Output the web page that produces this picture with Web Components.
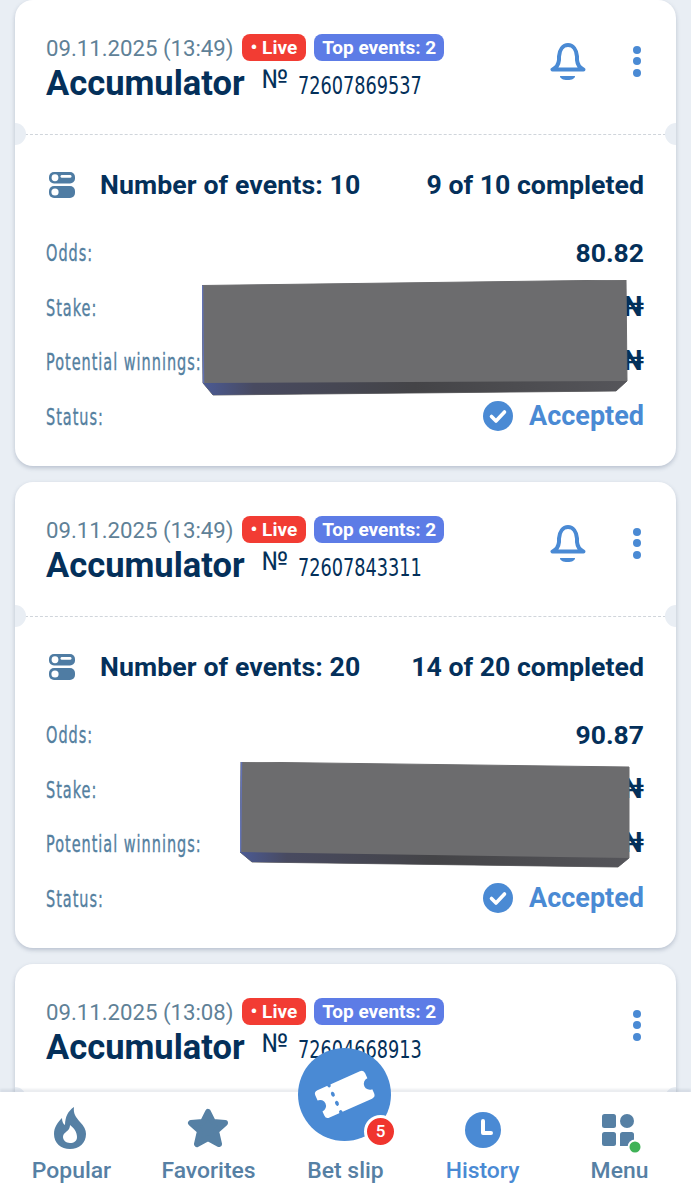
<!DOCTYPE html>
<html lang="en">
<head>
<meta charset="utf-8">
<title>Bet history</title>
<style>
  html, body { margin: 0; padding: 0; background: #e9eef4; }
  body { font-family: Roboto, "Liberation Sans", sans-serif; }
</style>
</head>
<body>
<app-shell>
  <bet-card>
    <span slot="date">09.11.2025 (13:49)</span>
    <span slot="number">72607869537</span>
    <span slot="events">Number of events: 10</span>
    <span slot="completed">9 of 10 completed</span>
    <span slot="odds">80.82</span>
    <bell-icon slot="bell"></bell-icon>
    <redact-block slot="cover" points="0,5.5 424,0 425,101 414,111 11,115 1,103" fold="1,103 425,101 414,111 11,115" style="left:187px;top:280px;width:426px;height:116px"></redact-block>
  </bet-card>
  <bet-card>
    <span slot="date">09.11.2025 (13:49)</span>
    <span slot="number">72607843311</span>
    <span slot="events">Number of events: 20</span>
    <span slot="completed">14 of 20 completed</span>
    <span slot="odds">90.87</span>
    <bell-icon slot="bell"></bell-icon>
    <redact-block slot="cover" points="1,0 389,5 389,96 378,105 12,100 0,90" fold="0,90 389,96 378,105 12,100" style="left:225px;top:280px;width:390px;height:106px"></redact-block>
  </bet-card>
  <bet-card peek>
    <span slot="date">09.11.2025 (13:08)</span>
    <span slot="number">72604668913</span>
  </bet-card>
  <nav-bar slot="nav"></nav-bar>
</app-shell>

<script>
/**
 * Define the bell icon.
 */
customElements.define('bell-icon',
  class extends HTMLElement {
    constructor () {
      super()
      this.attachShadow({ mode: 'open' }).innerHTML = `
        <style>
          :host { display: block; width: 36px; height: 38px; }
          svg { display: block; }
        </style>
        <svg width="36" height="38" viewBox="0 0 36 38" fill="none">
          <path d="M2.5 26.5H33.5C30 25 27.5 22 27 17V13.5C26.5 6.5 23 2 18 2C13 2 9.500 6.500 9 13.500V17C8.500 22 6 25 2.500 26.500Z" stroke="#4a8ad4" stroke-width="4" stroke-linejoin="round"/>
          <path d="M10 33H25C25 35.500 22 37 17.500 37C13 37 10 35.500 10 33Z" fill="#4a8ad4"/>
        </svg>`
    }
  }
)

/**
 * Define the grey block laid over the hidden amounts.
 */
customElements.define('redact-block',
  class extends HTMLElement {
    constructor () {
      super()
      this.attachShadow({ mode: 'open' })
    }

    /**
     * Called after the element is inserted into the DOM.
     */
    connectedCallback () {
      const id = 'g' + Math.round(Math.random() * 1e6)
      const fold = this.getAttribute('fold').split(/[ ,]/).map(Number)
      const top = this.getAttribute('points').split(/[ ,]/).map(Number)
      this.shadowRoot.innerHTML = `
        <style>
          :host { display: block; position: absolute; }
          svg { display: block; width: 100%; height: 100%; }
        </style>
        <svg viewBox="0 0 ${parseInt(this.style.width)} ${parseInt(this.style.height)}">
          <defs>
            <linearGradient id="${id}" x1="0" x2="1" y1="0" y2="0">
              <stop offset="0" stop-color="#4b5a94"/>
              <stop offset="0.12" stop-color="#484a60"/>
              <stop offset="0.5" stop-color="#444447"/>
              <stop offset="1" stop-color="#55555a"/>
            </linearGradient>
          </defs>
          <polygon points="${this.getAttribute('points')}" fill="#6c6c6e" stroke="#6c6c6e" stroke-width="1" stroke-linejoin="round"/>
          <polygon points="${this.getAttribute('fold')}" fill="url(#${id})"/>
          <path d="M${top[0] + 0.5} ${top[1]}L${fold[0] + 0.5} ${fold[1]}" stroke="#6272b4" stroke-width="1.500" fill="none"/>
        </svg>`
    }
  }
)

/**
 * Define a label and value row of a bet card.
 */
customElements.define('info-row',
  class extends HTMLElement {
    constructor () {
      super()
      this.attachShadow({ mode: 'open' }).innerHTML = `
        <style>
          :host {
            display: flex;
            align-items: center;
            justify-content: space-between;
            height: 54.500px;
          }
          .label {
            flex: 0 0 0;
            padding-top: 2px;
            font: 400 23px "DejaVu Sans Condensed", "DejaVu Sans", sans-serif;
            color: #54809f;
            letter-spacing: 1.400px;
            -webkit-text-stroke: .35px #54809f;
            transform: scaleX(.7);
            transform-origin: left center;
            white-space: nowrap;
          }
          .value {
            display: flex;
            align-items: center;
            gap: 16px;
            font: 700 27px Roboto, sans-serif;
            color: #04305a;
          }
        </style>
        <span class="label"><slot name="label"></slot></span>
        <span class="value"><slot></slot></span>`
    }
  }
)

/**
 * Define the bet card.
 */
const cardTemplate = document.createElement('template')
cardTemplate.innerHTML = `
  <style>
    :host {
      display: block;
      position: relative;
      width: 661px;
      height: 466px;
      flex: none;
      background: #fff;
      border-radius: 18px;
      box-shadow: 0 2px 4px rgba(60, 80, 110, .28);
      color: #04305a;
    }
    :host([peek]) .body { display: none; }
    header {
      position: relative;
      box-sizing: border-box;
      height: 135px;
      padding: 34px 31px 0;
      border-bottom: 1px dashed #d0d5db;
    }
    .notch {
      position: absolute;
      top: 123px;
      width: 22px;
      height: 22px;
      border-radius: 50%;
      background: #e9eef4;
    }
    .notch.left { left: -11px; clip-path: inset(0 0 0 11px); }
    .notch.right { right: -11px; clip-path: inset(0 11px 0 0); }
    .top { display: flex; align-items: center; gap: 8px; height: 27px; }
    .date { font-size: 22.200px; color: #5f8197; white-space: nowrap; }
    .badge {
      box-sizing: border-box;
      height: 27px;
      padding: 0 8px;
      border-radius: 8px;
      font-size: 19px;
      font-weight: 700;
      line-height: 27px;
      color: #fff;
      white-space: nowrap;
    }
    .live { background: #f23c33; padding: 0 9px; }
    .count { background: #5d7ce6; }
    .title { display: flex; align-items: flex-start; margin-top: 3px; }
    h2 { margin: 0; font-size: 34.500px; line-height: 38px; font-weight: 700; color: #04305a; white-space: nowrap; }
    .no { margin: 2px 0 0 17px; font-size: 26px; line-height: 26px; width: 25px; flex: none; }
    .num {
      margin: 10px 0 0 11px;
      font: 400 24px/24px "DejaVu Sans Condensed", "DejaVu Sans", sans-serif;
      transform: scaleX(.82);
      transform-origin: left center;
      white-space: nowrap;
    }
    .actions {
      position: absolute;
      top: 43px;
      right: 35px;
      display: flex;
      align-items: flex-start;
      gap: 47px;
    }
    .kebab { display: flex; flex-direction: column; gap: 3.500px; margin-top: 2.500px; width: 8px; }
    .kebab i { display: block; width: 8px; height: 8px; border-radius: 50%; background: #4a8ad4; }
    .body { padding: 35px 32px 22px 31px; }
    .events { display: flex; align-items: center; height: 30px; font-size: 26.700px; font-weight: 700; white-space: nowrap; }
    .events svg { margin: 0 25px 0 3px; flex: none; }
    .events .count-text { letter-spacing: .1px; }
    .events .done { margin-left: auto; }
    .rows { margin-top: 25px; }
    .accepted { color: #4a8ad4; }
    .check { display: block; }
    .odds { font-size: 26.500px; }
  </style>
  <header>
    <div class="top">
      <span class="date"><slot name="date"></slot></span>
      <span class="badge live">&bull; Live</span>
      <span class="badge count">Top events: 2</span>
    </div>
    <div class="title">
      <h2>Accumulator</h2>
      <span class="no">№</span>
      <span class="num"><slot name="number"></slot></span>
    </div>
    <div class="actions">
      <slot name="bell"></slot>
      <div class="kebab"><i></i><i></i><i></i></div>
    </div>
  </header>
  <i class="notch left"></i>
  <i class="notch right"></i>
  <div class="body">
    <div class="events">
      <svg width="26" height="26" viewBox="0 0 26 26">
        <rect x="0" y="0" width="26" height="11.500" rx="5" fill="#4f7ca3"/>
        <rect x="0" y="14" width="26" height="12" rx="5" fill="#4f7ca3"/>
        <circle cx="6" cy="5.750" r="3.400" fill="#fff"/>
        <rect x="11.500" y="3" width="11" height="2.800" rx="1.400" fill="#fff"/>
        <circle cx="6" cy="20" r="3.600" fill="#fff"/>
      </svg>
      <span class="count-text"><slot name="events"></slot></span>
      <span class="done"><slot name="completed"></slot></span>
    </div>
    <div class="rows">
      <info-row><span slot="label">Odds:</span><span class="odds"><slot name="odds"></slot></span></info-row>
      <info-row><span slot="label">Stake:</span>₦</info-row>
      <info-row><span slot="label">Potential winnings:</span>₦</info-row>
      <info-row>
        <span slot="label">Status:</span>
        <svg class="check" width="30" height="30" viewBox="0 0 30 30">
          <circle cx="15" cy="15" r="15" fill="#4a8ad4"/>
          <path d="M8.500 15.500L13 20L21.500 11" fill="none" stroke="#fff" stroke-width="3.600" stroke-linecap="round" stroke-linejoin="round"/>
        </svg>
        <span class="accepted">Accepted</span>
      </info-row>
    </div>
  </div>
  <slot name="cover"></slot>
`

customElements.define('bet-card',
  class extends HTMLElement {
    constructor () {
      super()
      this.attachShadow({ mode: 'open' })
        .appendChild(cardTemplate.content.cloneNode(true))
    }
  }
)

/**
 * Define one item of the bottom navigation.
 */
customElements.define('nav-item',
  class extends HTMLElement {
    constructor () {
      super()
      this.attachShadow({ mode: 'open' }).innerHTML = `
        <style>
          :host {
            display: flex;
            flex-direction: column;
            align-items: center;
            color: #5680a4;
            font-size: 22.900px;
            font-weight: 500;
          }
          :host([active]) { color: #4a8ad4; }
          .icon { height: 42px; margin-top: 15px; display: flex; align-items: center; justify-content: center; }
          .text { margin-top: 9px; line-height: 26px; white-space: nowrap; }
        </style>
        <div class="icon"><slot name="icon"></slot></div>
        <div class="text"><slot></slot></div>`
    }
  }
)

/**
 * Define the bottom navigation.
 */
const navTemplate = document.createElement('template')
navTemplate.innerHTML = `
  <style>
    :host {
      display: block;
      position: relative;
      height: 108px;
      background: #fff;
      box-shadow: 0 -3px 2px rgba(60, 80, 110, .1);
    }
    .items { display: grid; grid-template-columns: repeat(5, 137px); padding: 0 3px; }
    .fab {
      position: absolute;
      left: 298px;
      top: -44px;
      width: 93px;
      height: 93px;
      border-radius: 50%;
      background: #4a8ad4;
    }
    .fab svg { display: block; }
    .count {
      position: absolute;
      left: 66px;
      top: 67px;
      width: 27px;
      height: 27px;
      border-radius: 50%;
      border: 3px solid #fff;
      background: #f0352e;
      color: #fff;
      font-size: 17px;
      font-weight: 500;
      line-height: 27px;
      text-align: center;
    }
  </style>
  <div class="items">
    <nav-item>
      <svg slot="icon" style="margin-right:3px" width="32" height="42" viewBox="0 0 32 42">
        <path fill="#5680a4" d="M20 0C19 7 22 10 26 15C30 19 32 23 32 27C32 36 25 42 16 42C7 42 0 36 0 27C0 20 4 15 8 11C8 14 9 17 11 18C11 10 14 4 20 0Z"/>
        <path fill="#fff" d="M16 36C12 36 9 33 9 30C9 26 13 25 15 22C16 20 16 18 16 18C20 21 23 25 23 30C23 34 20 36 16 36Z"/>
      </svg>
      Popular
    </nav-item>
    <nav-item>
      <svg slot="icon" style="margin-right:2px" width="42" height="40" viewBox="0 0 42 40">
        <polygon fill="#5680a4" stroke="#5680a4" stroke-width="6" stroke-linejoin="round" points="21,4 26,14 38,15 29,23 32,36 21,30 10,36 13,23 4,15 16,14"/>
      </svg>
      Favorites
    </nav-item>
    <nav-item>
      <span style="display:block;width:30px;height:42px" slot="icon"></span>
      Bet slip
    </nav-item>
    <nav-item active>
      <svg slot="icon" style="margin-top:4px" width="36" height="36" viewBox="0 0 36 36">
        <circle cx="18" cy="18" r="18" fill="#4a8ad4"/>
        <path d="M18 9V21H26" fill="none" stroke="#fff" stroke-width="4" stroke-linecap="round" stroke-linejoin="round"/>
      </svg>
      History
    </nav-item>
    <nav-item>
      <svg slot="icon" style="margin:10px 0 0 3px" width="42" height="42" viewBox="0 0 42 42">
        <rect x="2" y="2" width="14" height="14" rx="2.500" fill="#5680a4"/>
        <circle cx="27" cy="9" r="7" fill="#5680a4"/>
        <rect x="2" y="20" width="14" height="14" rx="2.500" fill="#5680a4"/>
        <path d="M22.500 20H31.500C33 20 34 21 34 22.500V31.500C34 33 33 34 31.500 34H20V22.500C20 21 21 20 22.500 20Z" fill="#5680a4"/>
        <circle cx="35" cy="35" r="7.500" fill="#fff"/>
        <circle cx="35" cy="35" r="5.500" fill="#3fb257"/>
      </svg>
      Menu
    </nav-item>
  </div>
  <div class="fab">
    <svg width="93" height="93" viewBox="0 0 93 93">
      <g transform="rotate(-24 46.500 46.500)">
        <path fill="#fff" d="M23.500 31.500H70A4 4 0 0 1 74 35.500V41A6 6 0 0 0 74 53V57.500A4 4 0 0 1 70 61.500H23.500A4 4 0 0 1 19.500 57.500V53A6 6 0 0 0 19.500 41V35.500A4 4 0 0 1 23.500 31.500Z"/>
        <g fill="#4a8ad4">
          <ellipse cx="36" cy="31.500" rx="1.800" ry="2.500"/>
          <ellipse cx="36" cy="41.500" rx="1.800" ry="2.600"/>
          <ellipse cx="36" cy="51.500" rx="1.800" ry="2.600"/>
          <ellipse cx="36" cy="61.500" rx="1.800" ry="2.500"/>
        </g>
      </g>
    </svg>
    <div class="count">5</div>
  </div>
`

customElements.define('nav-bar',
  class extends HTMLElement {
    constructor () {
      super()
      this.attachShadow({ mode: 'open' })
        .appendChild(navTemplate.content.cloneNode(true))
    }
  }
)

/**
 * Define the page frame: a clipped list above the navigation.
 */
customElements.define('app-shell',
  class extends HTMLElement {
    constructor () {
      super()
      this.attachShadow({ mode: 'open' }).innerHTML = `
        <style>
          :host {
            display: flex;
            flex-direction: column;
            height: 1200px;
            overflow: hidden;
            background: #e9eef4;
          }
          .list {
            flex: 1;
            min-height: 0;
            overflow: hidden;
            display: flex;
            flex-direction: column;
            gap: 16px;
            padding: 0 15px;
          }
        </style>
        <div class="list"><slot></slot></div>
        <slot name="nav"></slot>`
    }
  }
)
</script>
</body>
</html>
